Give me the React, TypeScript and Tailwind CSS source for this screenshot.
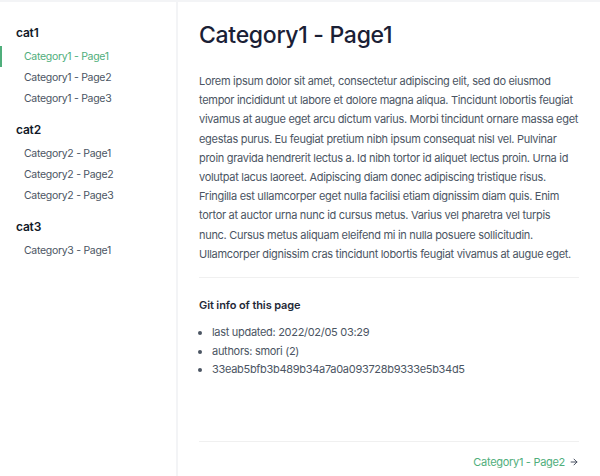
const nav = [
  { title: "cat1", pages: ["Category1 - Page1", "Category1 - Page2", "Category1 - Page3"] },
  { title: "cat2", pages: ["Category2 - Page1", "Category2 - Page2", "Category2 - Page3"] },
  { title: "cat3", pages: ["Category3 - Page1"] },
];

const active = "Category1 - Page1";

const lorem =
  "Lorem ipsum dolor sit amet, consectetur adipiscing elit, sed do eiusmod tempor incididunt ut labore et dolore magna aliqua. Tincidunt lobortis feugiat vivamus at augue eget arcu dictum varius. Morbi tincidunt ornare massa eget egestas purus. Eu feugiat pretium nibh ipsum consequat nisl vel. Pulvinar proin gravida hendrerit lectus a. Id nibh tortor id aliquet lectus proin. Urna id volutpat lacus laoreet. Adipiscing diam donec adipiscing tristique risus. Fringilla est ullamcorper eget nulla facilisi etiam dignissim diam quis. Enim tortor at auctor urna nunc id cursus metus. Varius vel pharetra vel turpis nunc. Cursus metus aliquam eleifend mi in nulla posuere sollicitudin. Ullamcorper dignissim cras tincidunt lobortis feugiat vivamus at augue eget.";

const gitInfo = [
  "last updated: 2022/02/05 03:29",
  "authors: smori (2)",
  "33eab5bfb3b489b34a7a0a093728b9333e5b34d5",
];

export default function App() {
  return (
    <div className="flex w-[600px] h-[476px] overflow-hidden bg-white border-t-2 border-[#f3f4f6] font-['Inter','Liberation_Sans',sans-serif]">
      <aside className="w-[178px] shrink-0 border-r-2 border-[#f3f4f6] pt-[21px]">
        {nav.map((cat) => (
          <div key={cat.title} className="mb-[11px]">
            <div className="px-4 text-[12px] leading-[20px] font-semibold tracking-[-0.2px] text-[#111827]">{cat.title}</div>
            <ul className="mt-[3px]">
              {cat.pages.map((p) => (
                <li
                  key={p}
                  className={
                    p === active
                      ? "border-l-2 border-[#4fae7b] pl-[22px] text-[10.5px] leading-[21px] tracking-[-0.3px] text-[#4fae7b]"
                      : "border-l-2 border-transparent pl-[22px] text-[10.5px] leading-[21px] tracking-[-0.3px] text-[#4b5563]"
                  }
                >
                  {p}
                </li>
              ))}
            </ul>
          </div>
        ))}
      </aside>

      <main className="flex-1 flex flex-col px-[21px] tracking-[-0.3px]">
        <h1 className="pt-[17px] text-[23px] leading-[32px] font-medium text-[#1a2035]">Category1 - Page1</h1>
        <p className="mt-[21px] text-[11px] leading-[19.2px] text-[#4b5563]">{lorem}</p>

        <div className="mt-[13px] border-t border-[#f0f0f0] pt-[17px]">
          <h2 className="text-[11px] leading-[20px] font-semibold tracking-[-0.1px] text-[#1f2937]">Git info of this page</h2>
          <ul className="mt-[8px] list-disc pl-[13px] text-[11px] leading-[18.5px] text-[#4b5563]">
            {gitInfo.map((g) => (
              <li key={g}>{g}</li>
            ))}
          </ul>
        </div>

        <div className="flex-1" />

        <div className="border-t border-[#f0f0f0] pt-[11px] pb-[5px] flex justify-end">
          <span className="flex items-center gap-[4px] text-[11px] leading-[18px] text-[#4fae7b]">
            Category1 - Page2
            <svg width="10" height="10" viewBox="0 0 24 24" fill="none" stroke="#374151" strokeWidth="2.2" strokeLinecap="round" strokeLinejoin="round">
              <path d="M5 12h14" />
              <path d="M12 5l7 7-7 7" />
            </svg>
          </span>
        </div>
      </main>
    </div>
  );
}
